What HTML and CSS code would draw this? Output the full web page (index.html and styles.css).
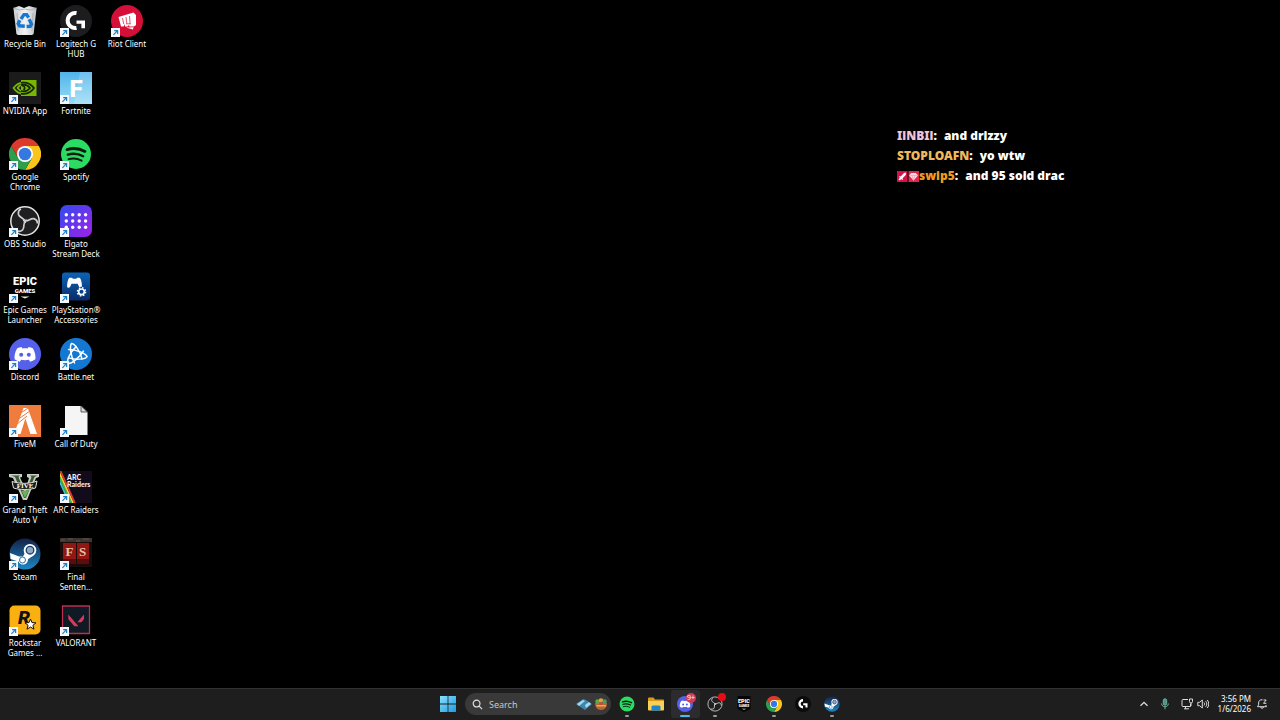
FILE: index.html
```html
<!DOCTYPE html>
<html lang="en">
<head>
    <meta charset="UTF-8">
    <meta name="viewport" content="width=device-width, initial-scale=1.0">
    <title>Desktop</title>
    <link rel="stylesheet" href="styles.css">
</head>
<body>
    <!-- icon sprite -->
    <svg class="sprite" aria-hidden="true">
        <defs>
            <linearGradient id="g-fortnite" x1="0" y1="0" x2="0" y2="1"><stop offset="0" stop-color="#4fb4ea"/><stop offset="1" stop-color="#9bdcf6"/></linearGradient>
            <linearGradient id="g-deck" x1="0" y1="0" x2="1" y2="1"><stop offset="0" stop-color="#2f4cf0"/><stop offset="1" stop-color="#a11fe8"/></linearGradient>
            <linearGradient id="g-ps" x1="0" y1="0" x2="0" y2="1"><stop offset="0" stop-color="#0b63b8"/><stop offset="1" stop-color="#0a2c66"/></linearGradient>
            <linearGradient id="g-steam" x1="0" y1="0" x2="0" y2="1"><stop offset="0" stop-color="#14224a"/><stop offset="1" stop-color="#1c86c4"/></linearGradient>
            <linearGradient id="g-win" x1="0" y1="0" x2="1" y2="1"><stop offset="0" stop-color="#8be0fb"/><stop offset="1" stop-color="#1b9ce4"/></linearGradient>
            <linearGradient id="g-bin" x1="0" y1="0" x2="1" y2="0"><stop offset="0" stop-color="#c9ccd0"/><stop offset=".5" stop-color="#f2f3f5"/><stop offset="1" stop-color="#b9bdc2"/></linearGradient>
            <clipPath id="nv-clip"><path d="M12 8h16v16H12z"/></clipPath>
        </defs>

        <symbol id="arrow" viewBox="0 0 9 9">
            <path fill="#f4f8fc" d="M0 0h9v9H0z"/>
            <path d="M2.4 6.8 6 3.2M3.2 2.6h3.4v3.5" fill="none" stroke="#1f7fc4" stroke-width="1.2"/>
        </symbol>

        <symbol id="bin" viewBox="0 0 32 32">
            <path fill="url(#g-bin)" d="M4.400 3 10 1l5 2 5-2 7.600 2-3 26-1.600 1H9l-1.600-1z"/>
            <path d="m4.400 3 6 2 5-1 6 1 6.200-2M8 8l1 18M24 8l-1 18" fill="none" stroke="#a5a9ae" stroke-width=".8"/>
            <g fill="none" stroke="#1976cf" stroke-width="3.400">
                <path id="rc" d="m12 14 3-4.400h2.600l2 3"/>
                <use href="#rc" transform="rotate(120 16 16.500)"/>
                <use href="#rc" transform="rotate(240 16 16.500)"/>
            </g>
        </symbol>

        <symbol id="ghub" viewBox="0 0 32 32">
            <circle cx="16" cy="16" r="16" fill="#1d1d1f"/>
            <path d="M16.500 8A7.600 7.600 0 1 0 16.500 23" fill="none" stroke="#fff" stroke-width="4"/>
            <path fill="#fff" d="M16.500 15.400H25v7.800h-3.600v-4.400h-4.900z"/>
        </symbol>

        <symbol id="ghub-small" viewBox="0 0 32 32">
            <circle cx="16" cy="16" r="16" fill="#0b0b0b"/>
            <path d="M16 8.500A7 7 0 1 0 16 22.500" fill="none" stroke="#fff" stroke-width="4.600"/>
            <path fill="#fff" d="M16.500 14.400H25v8.800h-4v-4.800h-4.500z"/>
        </symbol>

        <symbol id="riot" viewBox="0 0 32 32">
            <circle cx="16" cy="16" r="16" fill="#d50f38"/>
            <path fill="#fff" d="m7.500 12 15-4.500L25 10v10l-2 1.600h-4.500l-.5-1.600-1.400 1.600H14L13.500 19l-.8 2.600H10zM15 22.600l7.500-.4L22 24.600z"/>
            <path d="m11.500 13 1.200 6M15 12l.8 6.500M18.600 11l.4 7.500M15 18.800h5" stroke="#d50f38" stroke-width=".7"/>
        </symbol>

        <symbol id="nvidia" viewBox="0 0 32 32">
            <path fill="#1b1b1b" d="M0 0h32v32H0z"/>
            <g fill="none" stroke="#76b900" stroke-width="1.700">
                <path d="M4.500 16C9 9.500 19 8 25 16c-5 7.500-15 8-20.500 0z"/>
                <path d="M8.500 16c3-4.500 9-4.500 12.500 0-3.500 4.500-9 4.500-12.500 0z"/>
            </g>
            <path fill="#76b900" d="M12 8h15.500v16H12z"/>
            <g clip-path="url(#nv-clip)" fill="none" stroke="#17220a" stroke-width="1.700">
                <path d="M4.500 16C9 9.500 19 8 25 16c-5 7.500-15 8-20.500 0z"/>
                <path d="M8.500 16c3-4.500 9-4.500 12.500 0-3.500 4.500-9 4.500-12.500 0z"/>
                <path d="M13 13.500c3 .5 3.500 3 1.500 4.500"/>
            </g>
        </symbol>

        <symbol id="chrome" viewBox="0 0 32 32">
            <path fill="#dd3a2e" d="M2.140 8A16 16 0 0 1 29.860 8H16v8l-6.930 4z"/>
            <path fill="#fbc41a" d="M29.860 8A16 16 0 0 1 16 32l6.930-12L16 16V8z"/>
            <path fill="#2f9e4c" d="M16 32A16 16 0 0 1 2.140 8l6.930 12L16 16l6.930 4z"/>
            <circle cx="16" cy="16" r="8" fill="#fff"/>
            <circle cx="16" cy="16" r="6.300" fill="#3478e0"/>
        </symbol>

        <symbol id="spotify" viewBox="0 0 32 32">
            <circle cx="16" cy="16" r="15" fill="#2bdc62"/>
            <g fill="none" stroke="#0c1a10" stroke-linecap="round">
                <path d="M7 11.600c6-1.800 12.500-1.200 18 1.800" stroke-width="2.800"/>
                <path d="M7.800 16.600c5.400-1.500 10.700-.9 15.400 1.600" stroke-width="2.300"/>
                <path d="M8.600 21.200c4.600-1.200 9-.7 13 1.500" stroke-width="1.900"/>
            </g>
        </symbol>

        <symbol id="obs" viewBox="0 0 32 32">
            <circle cx="16" cy="16" r="14.200" fill="#1f1f22" stroke="#e4e4e4" stroke-width="1.500"/>
            <g fill="none" stroke="#cfcfcf" stroke-width="1.700">
                <path id="blade" d="M16 16.500c-1-4-5.500-3.500-6.500-7C9 7 10 5 12 4M16 16.500c.6-.4 1-1 1.400-2"/>
                <use href="#blade" transform="rotate(120 16 16)"/>
                <use href="#blade" transform="rotate(240 16 16)"/>
            </g>
        </symbol>

        <symbol id="deck" viewBox="0 0 32 32">
            <rect width="32" height="32" rx="7" fill="url(#g-deck)"/>
            <g fill="#fff">
                <circle cx="6.300" cy="9.700" r="1.700"/><circle cx="12.700" cy="9.700" r="1.700"/><circle cx="19.200" cy="9.700" r="1.700"/><circle cx="25.600" cy="9.700" r="1.700"/>
                <circle cx="6.300" cy="16" r="1.700"/><circle cx="12.700" cy="16" r="1.700"/><circle cx="19.200" cy="16" r="1.700"/><circle cx="25.600" cy="16" r="1.700"/>
                <circle cx="6.300" cy="22.300" r="1.700"/><circle cx="12.700" cy="22.300" r="1.700"/><circle cx="19.200" cy="22.300" r="1.700"/><circle cx="25.600" cy="22.300" r="1.700"/>
            </g>
        </symbol>

        <symbol id="ps" viewBox="0 0 32 32">
            <rect x="2" y="1.500" width="28" height="28" rx="3" fill="url(#g-ps)"/>
            <path fill="#fff" d="M9.500 6.800h2.600l.8.900h3.400l.8-.9h2.500c1.400.6 2.500 5.800 2.400 8.700-.1 1.600-2.300 1.700-3 .2l-1.300-2.900h-6.200l-1.300 2.900c-.8 1.500-3 1.400-3.100-.2-.1-2.900 1-8.100 2.400-8.700z"/>
            <circle cx="21.500" cy="20.800" r="5" fill="#0b408a"/>
            <circle cx="21.500" cy="20.800" r="2.800" fill="none" stroke="#fff" stroke-width="1.600"/>
            <circle cx="21.500" cy="20.800" r="4.100" fill="none" stroke="#fff" stroke-width="1.400" stroke-dasharray="1.600 1.620"/>
        </symbol>

        <symbol id="discord" viewBox="0 0 32 32">
            <circle cx="16" cy="16" r="16" fill="#5661ea"/>
            <path fill="#fff" d="M12.600 9c-1.700.3-3.100.7-4.400 1.300C6 13.800 5.200 17.800 5.600 21.300c1.700 1.200 3.500 2 5.300 2.400l1.200-2c2.600.6 5.200.6 7.800 0l1.200 2c1.800-.4 3.600-1.200 5.300-2.400.4-3.500-.4-7.500-2.600-11-1.300-.6-2.700-1-4.400-1.300l-.7 1.400c-1.800-.3-3.600-.3-5.400 0z"/>
            <g fill="#5661ea"><circle cx="12.200" cy="16.800" r="2"/><circle cx="19.800" cy="16.800" r="2"/></g>
        </symbol>

        <symbol id="bnet" viewBox="0 0 32 32">
            <circle cx="16" cy="16" r="16" fill="#1478d2"/>
            <g fill="none" stroke="#fff" stroke-width="1.500" stroke-linecap="round">
                <path id="orbit" d="M14.500 25C10.500 18 9.500 8 11.500 5.500c3 0 8.500 7 10.500 15.500"/>
                <use href="#orbit" transform="rotate(120 15.500 16.500)"/>
                <use href="#orbit" transform="rotate(240 15.500 16.500)"/>
            </g>
        </symbol>

        <symbol id="fivem" viewBox="0 0 32 32">
            <path fill="#ef7b3c" d="M0 0h32v32H0z"/>
            <path fill="#fff" d="M14.500 3h4.300L28 29h-6.600l-5-15.500L11.500 29H5z"/>
            <path d="m8 15 13-9M7.500 19.500 18 11M9 10l10-7" stroke="#ef7b3c" stroke-width="1"/>
        </symbol>

        <symbol id="file" viewBox="0 0 32 32">
            <path fill="#f5f5f5" d="M5 1h16.500L27.500 7v23H5z"/>
            <path fill="#d8d8d8" stroke="#222" stroke-width=".7" d="M21 .8V7h6.300z"/>
        </symbol>

        <symbol id="steam" viewBox="0 0 32 32">
            <circle cx="16" cy="16" r="15.500" fill="url(#g-steam)"/>
            <path fill="#fff" d="m1 15 9 3.400 4 .1 3-5.500 8 4-6 4.300c0 6-7.500 7.200-9.500 2.200L1.600 21z"/>
            <circle cx="21" cy="12.200" r="6.300" fill="#fff"/>
            <circle cx="21" cy="12.200" r="3.800" fill="#8fa8c4" stroke="#1a3a66" stroke-width="1.300"/>
            <circle cx="13.500" cy="22" r="3" fill="none" stroke="#1b5c92" stroke-width=".9"/>
        </symbol>

        <symbol id="valorant" viewBox="0 0 32 32">
            <path fill="#101a25" stroke="#bb2f50" stroke-width="1.300" d="M2.500 2h27v27.500h-27z"/>
            <path fill="#d8395a" d="m8.300 10.500 10.200 11.700h-4.200L8.300 15zM24 10.500v4.600l-2.500 3.200h-4.200z"/>
        </symbol>

        <symbol id="win" viewBox="0 0 16 16">
            <path fill="url(#g-win)" d="M0 0h7.600v7.600H0zM8.400 0H16v7.600H8.400zM0 8.400h7.600V16H0zM8.400 8.400H16V16H8.400z"/>
        </symbol>

        <symbol id="folder" viewBox="0 0 16 16">
            <path fill="#d99a1e" d="M0 2.500a1 1 0 0 1 1-1h4.500l1.500 2h8a1 1 0 0 1 1 1V8H0z"/>
            <path fill="#f9cf55" d="M0 5h16v8.500a1 1 0 0 1-1 1H1a1 1 0 0 1-1-1z"/>
            <path fill="#1f86cf" d="M3.500 14.500V11a1.500 1.500 0 0 1 1.500-1.500h6a1.500 1.500 0 0 1 1.500 1.500v3.500z"/>
        </symbol>
    </svg>

    <main class="desktop">
        <nav class="icons" aria-label="Desktop icons">
            <a href="#" class="icon"><span class="pic"><svg><use href="#bin"/></svg></span>Recycle Bin</a>
            <a href="#" class="icon"><span class="pic"><svg><use href="#nvidia"/></svg><svg class="shortcut"><use href="#arrow"/></svg></span>NVIDIA App</a>
            <a href="#" class="icon"><span class="pic"><svg><use href="#chrome"/></svg><svg class="shortcut"><use href="#arrow"/></svg></span>Google Chrome</a>
            <a href="#" class="icon"><span class="pic"><svg><use href="#obs"/></svg><svg class="shortcut"><use href="#arrow"/></svg></span>OBS Studio</a>
            <a href="#" class="icon">
                <span class="pic">
                    <svg viewBox="0 0 32 32">
                        <text x="16" y="14" class="t-epic">EPIC</text>
                        <text x="16" y="22" class="t-games">GAMES</text>
                        <path fill="#e8e8e8" d="M11.500 25.600h9L16 27.600z"/>
                    </svg>
                    <svg class="shortcut"><use href="#arrow"/></svg>
                </span>Epic Games Launcher
            </a>
            <a href="#" class="icon"><span class="pic"><svg><use href="#discord"/></svg><svg class="shortcut"><use href="#arrow"/></svg></span>Discord</a>
            <a href="#" class="icon"><span class="pic"><svg><use href="#fivem"/></svg><svg class="shortcut"><use href="#arrow"/></svg></span>FiveM</a>
            <a href="#" class="icon">
                <span class="pic">
                    <svg viewBox="0 0 32 32">
                        <path fill="#c9cec5" d="M0 3h13v3l-2 .5 5.500 12L20 7l-2-1V3h12v3l-3 1-9 22h-4L4 7 0 6z"/>
                        <path fill="#3c5a36" d="M2 4.500h9l-1.500 1.500L16 22.500 22.500 6 21 4.500h7.500L25.500 6 17 27h-2L6 6z"/>
                        <path fill="#6fae5b" d="m12.500 20 3.500 7 4-8z"/>
                        <path fill="#1b1d1a" stroke="#dfe2dc" stroke-width="1" d="M3 10.500c8 2.500 18 2.500 25-.5L26.500 17c-7 2-15 2-22 0z"/>
                        <text x="16" y="17" class="t-five">FIVE</text>
                    </svg>
                    <svg class="shortcut"><use href="#arrow"/></svg>
                </span>Grand Theft Auto V
            </a>
            <a href="#" class="icon"><span class="pic"><svg><use href="#steam"/></svg><svg class="shortcut"><use href="#arrow"/></svg></span>Steam</a>
            <a href="#" class="icon">
                <span class="pic">
                    <svg viewBox="0 0 32 32">
                        <rect x=".5" y="1.500" width="31" height="29" rx="5" fill="#fbb012"/>
                        <text x="15" y="20" class="t-rock">R</text>
                        <path fill="#fff" stroke="#111" stroke-width="1" d="m21.500 15 1.500 3.600 4 .2-3.100 2.500 1.100 3.900-3.500-2.200-3.500 2.200 1.100-3.900-3.100-2.500 4-.2z"/>
                    </svg>
                    <svg class="shortcut"><use href="#arrow"/></svg>
                </span>Rockstar Games ...
            </a>

            <a href="#" class="icon"><span class="pic"><svg><use href="#ghub"/></svg><svg class="shortcut"><use href="#arrow"/></svg></span>Logitech G HUB</a>
            <a href="#" class="icon">
                <span class="pic">
                    <svg viewBox="0 0 32 32">
                        <path fill="url(#g-fortnite)" d="M0 0h32v32H0z"/>
                        <path fill="#fff" opacity=".18" d="M20 0h12v32H14z"/>
                        <text x="16" y="25" class="t-fortnite">F</text>
                    </svg>
                    <svg class="shortcut"><use href="#arrow"/></svg>
                </span>Fortnite
            </a>
            <a href="#" class="icon"><span class="pic"><svg><use href="#spotify"/></svg><svg class="shortcut"><use href="#arrow"/></svg></span>Spotify</a>
            <a href="#" class="icon"><span class="pic"><svg><use href="#deck"/></svg><svg class="shortcut"><use href="#arrow"/></svg></span>Elgato Stream Deck</a>
            <a href="#" class="icon"><span class="pic"><svg><use href="#ps"/></svg><svg class="shortcut"><use href="#arrow"/></svg></span>PlayStation® Accessories</a>
            <a href="#" class="icon"><span class="pic"><svg><use href="#bnet"/></svg><svg class="shortcut"><use href="#arrow"/></svg></span>Battle.net</a>
            <a href="#" class="icon"><span class="pic"><svg><use href="#file"/></svg><svg class="shortcut"><use href="#arrow"/></svg></span>Call of Duty</a>
            <a href="#" class="icon">
                <span class="pic">
                    <svg viewBox="0 0 32 32">
                        <path fill="#110b1b" d="M0 0h32v32H0z"/>
                        <g fill="none" stroke-width="1.800">
                            <path d="m-1 9 10.500 23" stroke="#3cc1d6"/>
                            <path d="m-1 5 12.300 27" stroke="#39b54a"/>
                            <path d="m-1 1 14.100 31" stroke="#f2d33a"/>
                            <path d="m.5 0 14.400 32" stroke="#e23a34"/>
                        </g>
                        <text x="7" y="9" class="t-arc">ARC</text>
                        <text x="7" y="16" class="t-arc">Raiders</text>
                    </svg>
                    <svg class="shortcut"><use href="#arrow"/></svg>
                </span>ARC Raiders
            </a>
            <a href="#" class="icon">
                <span class="pic">
                    <svg viewBox="0 0 32 32">
                        <path fill="#1a0c0b" d="M0 0h32v29H0z"/>
                        <path fill="#3d352f" d="M0 0h32v4H0z"/>
                        <path d="M1 2h4m3-1h5m3 2h4m3-2h6" stroke="#5f5950"/>
                        <path fill="#921613" d="M3 5h13v21H3zM17 5h12v21H17z"/>
                        <path fill="#5b0d0c" d="M3 21h13v5H3zM17 21h12v5H17z"/>
                        <text x="9.500" y="18" class="t-fs">F</text>
                        <text x="22.500" y="18" class="t-fs">S</text>
                    </svg>
                    <svg class="shortcut"><use href="#arrow"/></svg>
                </span>Final<br>Senten...
            </a>
            <a href="#" class="icon"><span class="pic"><svg><use href="#valorant"/></svg><svg class="shortcut"><use href="#arrow"/></svg></span>VALORANT</a>

            <a href="#" class="icon"><span class="pic"><svg><use href="#riot"/></svg><svg class="shortcut"><use href="#arrow"/></svg></span>Riot Client</a>
        </nav>

        <!-- stream chat overlay -->
        <section class="chat" aria-label="Chat">
            <p><span class="user pink">IlNBIl</span>:<span class="msg">and drizzy</span></p>
            <p><span class="user gold">STOPLOAFN</span>:<span class="msg">yo wtw</span></p>
            <p>
                <svg class="badge" viewBox="0 0 11 11"><path fill="#d3124a" d="M0 0h10.500v11H0z"/><path fill="#fff" d="M9 1.500 8.800 4 5.500 7.300l.5.900-.8.800-1-1-1.500 1.500-1.200-1.200L3 6.800l-1-1 .8-.8.9.5L7 2z"/></svg><svg class="badge" viewBox="0 0 11 11"><path fill="#e0284f" d="M.5 0H11v11H.5z"/><path fill="#ffd9e2" d="M3.200 2h4.600L10 4.500l-4.500 5-4.500-5z"/><path fill="none" stroke="#f592aa" stroke-width=".6" d="M1 4.500h9M4 4.500l1.500 5 1.500-5"/></svg><span class="user orange">swip5</span>:<span class="msg">and 95 sold drac</span>
            </p>
        </section>
    </main>

    <footer class="taskbar">
        <div class="center">
            <button class="app start" aria-label="Start"><svg><use href="#win"/></svg></button>
            <label class="search">
                <svg class="glass" viewBox="0 0 12 12"><circle cx="5" cy="5" r="3.700"/><path d="m7.800 7.800 3.200 3.200"/></svg>
                <input type="text" placeholder="Search" aria-label="Search">
                <svg class="doodle" viewBox="0 0 32 14">
                    <path fill="#3c86b0" d="m0 7 7-5 3 1 6 4-7 6-3-2z"/>
                    <path fill="#a6d8ee" d="m1 7 6-4 2 1-6 5zM9 8l4-3 2 2-5 4z"/>
                    <path fill="#b9652e" d="M19 6h12c0 4-2 7-6 7s-6-3-6-7z"/>
                    <path fill="#e8a860" d="M20 8h10v1.500H21z"/>
                    <circle cx="21.500" cy="4.500" r="2.200" fill="#5fa845"/><circle cx="25" cy="3.500" r="2.300" fill="#e5a13a"/><circle cx="28.600" cy="4.500" r="2.200" fill="#4f9a6a"/><circle cx="25" cy="6.500" r="1.500" fill="#cf4438"/>
                </svg>
            </label>
            <div class="apps">
                <button class="app running" aria-label="Spotify"><svg><use href="#spotify"/></svg></button>
                <button class="app" aria-label="File Explorer"><svg><use href="#folder"/></svg></button>
                <button class="app running active" aria-label="Discord"><svg><use href="#discord"/></svg><span class="count">9+</span></button>
                <button class="app running" aria-label="OBS Studio"><svg><use href="#obs"/></svg><span class="rec"></span></button>
                <button class="app" aria-label="Epic Games Launcher">
                    <svg viewBox="0 0 32 32">
                        <path fill="#050505" d="M5 0h22a2 2 0 0 1 2 2v24l-13 6-13-6V2a2 2 0 0 1 2-2z"/>
                        <text x="16" y="14" class="t-epic">EPIC</text>
                        <text x="16" y="22" class="t-games">GAMES</text>
                        <path fill="#e8e8e8" d="M11.500 25.600h9L16 27.600z"/>
                    </svg>
                </button>
                <button class="app running" aria-label="Google Chrome"><svg><use href="#chrome"/></svg></button>
                <button class="app" aria-label="Logitech G HUB"><svg><use href="#ghub-small"/></svg></button>
                <button class="app running" aria-label="Steam"><svg><use href="#steam"/></svg></button>
            </div>
        </div>

        <div class="tray">
            <button aria-label="Show hidden icons"><svg viewBox="0 0 12 12"><path d="m2.500 7.800 3.500-3.500 3.500 3.500" stroke-width="1.300"/></svg></button>
            <button class="mic" aria-label="Microphone"><svg viewBox="0 0 12 12"><rect x="4.300" y=".8" width="3.400" height="6.400" rx="1.700" fill="#4f9384"/><path d="M2.600 5.500c0 4.300 6.800 4.300 6.800 0M6 8.700v2.600"/></svg></button>
            <button class="system" aria-label="Network and volume">
                <svg viewBox="0 0 12 12"><path d="M7 1.500H2a1 1 0 0 0-1 1v5a1 1 0 0 0 1 1h7.500V6M3 10.800h5M4.500 8.500v2.300M8.500 1h3v2.500a1.500 1.500 0 0 1-3 0zM10 5v3"/></svg>
                <svg viewBox="0 0 12 12"><path d="M.8 4.300h1.800L5.300 2v8L2.600 7.700H.8zM7 4.500c.8 1 .8 2 0 3M8.700 3.200c1.500 1.700 1.500 3.900 0 5.600M10.300 2c2 2.400 2 5.600 0 8"/></svg>
            </button>
            <button class="clock">3:56 PM<br>1/6/2026</button>
            <button aria-label="Notifications"><svg viewBox="0 0 12 12"><path d="M6.500 1.800C4 1.300 2.600 3 2.600 5v1.800L1.500 8.700h9L9.700 7M4.700 9c.2 1.800 2.600 1.800 2.800 0M7.500 2h2.700L7.500 5.300h2.900"/></svg></button>
        </div>
    </footer>
</body>
</html>
```

FILE: styles.css
```css
* { margin: 0; padding: 0; box-sizing: border-box; }

body {
    font-family: "Noto Sans", "Open Sans", sans-serif;
    background: #000;
    color: #fff;
    height: 100vh;
    display: flex;
    flex-direction: column;
    overflow: hidden;
}

a { color: inherit; text-decoration: none; }

button {
    background: none;
    border: none;
    color: inherit;
    font: inherit;
}

svg { display: block; }

.sprite { position: absolute; width: 0; height: 0; }

/* Desktop */
.desktop {
    flex: 1;
    min-height: 0;
    position: relative;
}

.icons {
    display: grid;
    grid-template-rows: repeat(10, 1fr);
    grid-auto-flow: column;
    grid-auto-columns: 50px;
    column-gap: 1px;
    height: 100%;
    padding: 5px 0 17px;
}

.icon {
    font-size: 8px;
    line-height: 10px;
    text-align: center;
    min-height: 0;
}

.pic {
    display: block;
    position: relative;
    width: 32px;
    height: 32px;
    margin: 0 auto 2px;
}

.pic svg { width: 32px; height: 32px; }

.pic .shortcut {
    position: absolute;
    left: 0;
    bottom: 0;
    width: 9px;
    height: 9px;
}

/* lettering inside the icons */
.t-fortnite, .t-epic, .t-games, .t-five, .t-fs, .t-rock { text-anchor: middle; fill: #fff; }
.t-fortnite { font: 900 24px Roboto, sans-serif; }
.t-epic { font: 900 11px Roboto, sans-serif; }
.t-games { font: 900 6px Roboto, sans-serif; }
.t-five { font: bold 7px "Liberation Serif", serif; }
.t-fs { font: bold 13px "Liberation Serif", serif; fill: #e6c7a8; }
.t-rock { font: italic 900 19px Roboto, sans-serif; fill: #111; }
.t-arc { font: 900 7px Lato, sans-serif; fill: #f2eef5; }

/* Chat */
.chat {
    position: absolute;
    left: 70%;
    top: 126px;
    padding-left: 1px;
    font: 900 12px/20px "Noto Sans", "Open Sans", sans-serif;
}

.chat p { display: flex; align-items: center; }

.msg { margin-left: 7px; }

.badge { width: 11px; height: 11px; }

.pink { color: #f0c4dc; }
.gold { color: #f0b95c; }
.orange { color: #ee9a22; }

/* Taskbar */
.taskbar {
    display: grid;
    grid-template-columns: 1fr auto 1fr;
    height: 32px;
    background: #1e1e1e;
    box-shadow: inset 0 1px #333;
}

.center {
    grid-column: 2;
    display: flex;
    align-items: center;
}

.apps { display: flex; width: 235px; }

.app {
    flex: 1;
    position: relative;
    display: flex;
    align-items: center;
    justify-content: center;
    height: 28px;
    border-radius: 3px;
}

.app svg { width: 16px; height: 16px; }

.start { flex: none; width: 29px; margin-right: 3px; }

.running::after {
    content: "";
    position: absolute;
    bottom: 1px;
    width: 4px;
    height: 2px;
    border-radius: 1px;
    background: #9a9a9a;
}

.active { background: #2c2c2e; }
.active::after { width: 10px; background: #55b8e6; }

.count, .rec {
    position: absolute;
    right: 4px;
    top: 3px;
    border-radius: 50%;
}

.count {
    width: 10px;
    height: 10px;
    background: #d23c50;
    font-size: 7px;
    line-height: 10px;
    text-align: center;
}

.rec { width: 8px; height: 8px; background: #e80c14; }

.search {
    display: flex;
    align-items: center;
    width: 146px;
    height: 22px;
    padding: 0 3px 0 7px;
    margin-right: 1px;
    border-radius: 11px;
    background: #393939;
}

.search input {
    flex: 1;
    min-width: 0;
    margin-left: 6px;
    border: none;
    outline: none;
    background: none;
    color: #fff;
    font: 9px "Noto Sans", sans-serif;
}

.search input::placeholder { color: #c8c8c8; opacity: 1; }

.glass {
    width: 11px;
    height: 11px;
    fill: none;
    stroke: #e0e0e0;
    stroke-width: 1.3;
}

.doodle { width: 32px; height: 14px; }

.tray {
    display: flex;
    align-items: center;
    justify-content: flex-end;
    gap: 4px;
    padding-right: 12px;
}

.tray svg {
    width: 12px;
    height: 12px;
    fill: none;
    stroke: #dcdcdc;
    stroke-width: 1;
}

.tray button { margin-left: 1px; }
.tray .mic { margin: 0 5px; }
.tray .mic svg { stroke: #6fae9f; }

.system { display: flex; gap: 4px; }

.tray .clock {
    margin-left: 5px;
    font-size: 8px;
    line-height: 10px;
    text-align: right;
}
```
